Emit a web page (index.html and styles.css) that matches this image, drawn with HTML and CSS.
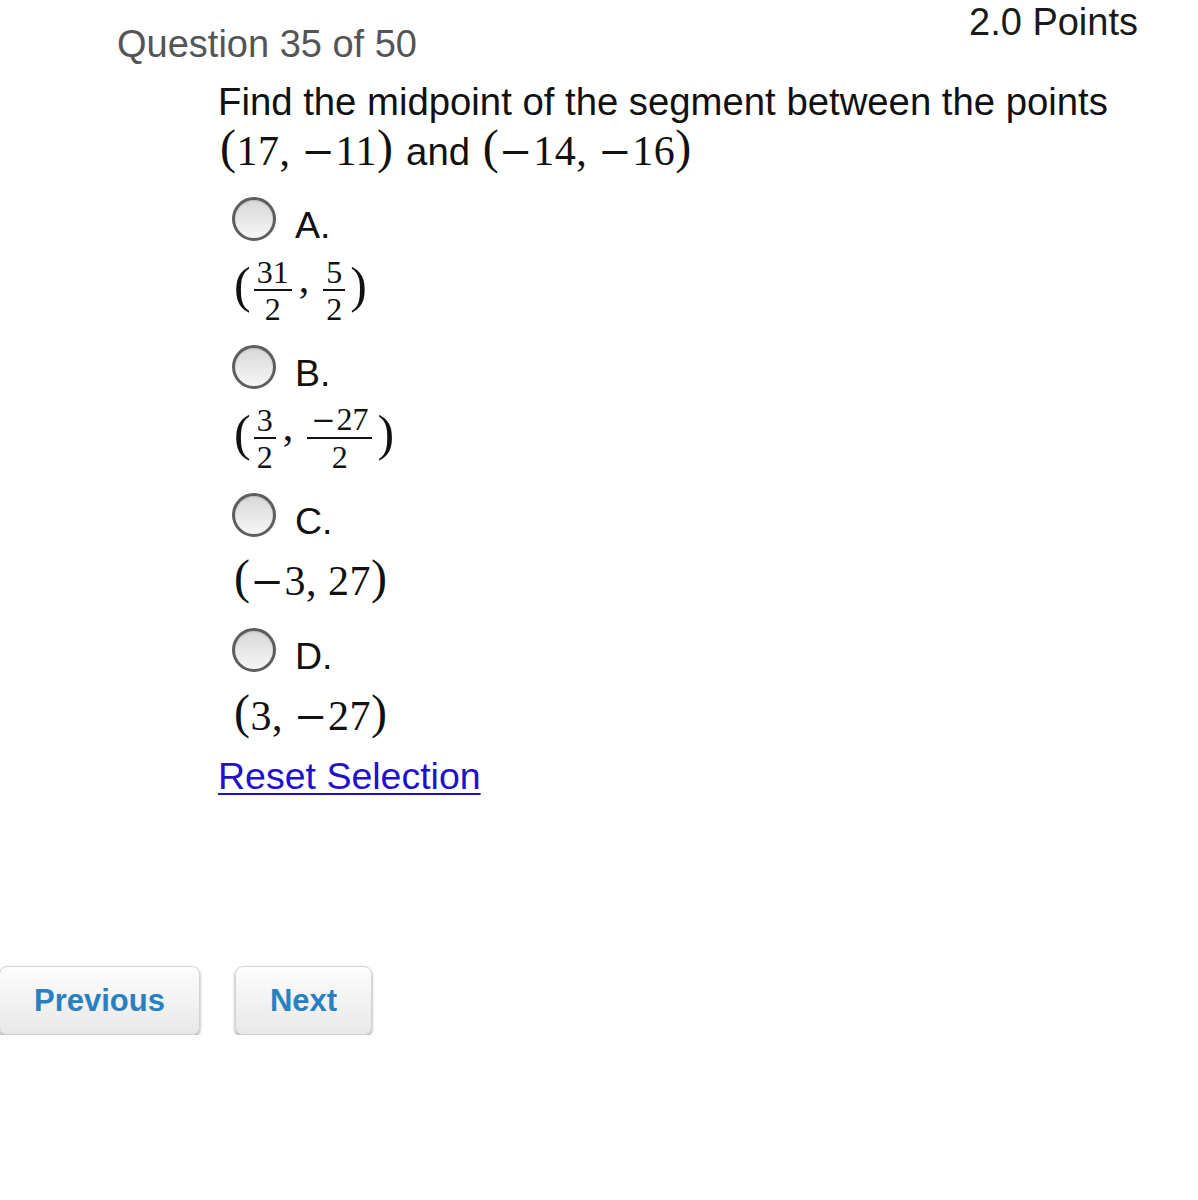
FILE: index.html
```html
<!DOCTYPE html>
<html lang="en">
<head>
<meta charset="utf-8">
<title>Question 35 of 50</title>
<link rel="stylesheet" href="styles.css">
</head>
<body>
<div class="header">
  <div class="qnum">Question 35 of 50</div>
  <div class="points">2.0 Points</div>
</div>
<div class="content">
  <div class="question">Find the midpoint of the segment between the points<br><span class="m"><span class="p">(</span>17, <span class="neg">−</span>11<span class="p">)</span></span> and <span class="m"><span class="p">(</span><span class="neg">−</span>14, <span class="neg">−</span>16<span class="p">)</span></span></div>

  <div class="option first">
    <div class="opt-row"><span class="radio"></span><span class="label">A.</span></div>
    <div class="answer frac-row">
      <span class="fp">(</span>
      <span class="frac"><span class="num">31</span><span class="den">2</span></span>
      <span class="fc">,</span>
      <span class="frac"><span class="num">5</span><span class="den">2</span></span>
      <span class="fp close">)</span>
    </div>
  </div>

  <div class="option">
    <div class="opt-row"><span class="radio"></span><span class="label">B.</span></div>
    <div class="answer frac-row">
      <span class="fp">(</span>
      <span class="frac"><span class="num">3</span><span class="den">2</span></span>
      <span class="fc">,</span>
      <span class="frac wide"><span class="num"><span class="fneg">−</span>27</span><span class="den">2</span></span>
      <span class="fp close">)</span>
    </div>
  </div>

  <div class="option">
    <div class="opt-row"><span class="radio"></span><span class="label">C.</span></div>
    <div class="answer simple"><span class="p">(</span><span class="neg">−</span>3, 27<span class="p">)</span></div>
  </div>

  <div class="option">
    <div class="opt-row"><span class="radio"></span><span class="label">D.</span></div>
    <div class="answer simple"><span class="p">(</span>3, <span class="neg">−</span>27<span class="p">)</span></div>
  </div>

  <div class="reset-wrap"><a class="reset" href="#">Reset Selection</a></div>
</div>

<div class="nav">
  <button class="btn" type="button">Previous</button>
  <button class="btn" type="button">Next</button>
</div>
</body>
</html>
```

FILE: styles.css
```css
body {
  margin: 0;
  background: #ffffff;
  font-family: "Liberation Sans", Arial, Helvetica, sans-serif;
  color: #111111;
}

.header {
  display: flex;
  justify-content: space-between;
  align-items: flex-start;
  padding: 0 60px 0 117px;
}

.qnum {
  margin-top: 22px;
  font-size: 38px;
  line-height: 44px;
  color: #555555;
}

.points {
  font-size: 38px;
  line-height: 44px;
  color: #1a1a1a;
}

.content {
  padding-left: 218px;
}

.question {
  margin-top: 11px;
  font-size: 38.3px;
  line-height: 50px;
  color: #111111;
}

.m {
  font-family: "Liberation Serif", "Times New Roman", serif;
  font-size: 42px;
  line-height: 44px;
  letter-spacing: 0.5px;
  margin: 0 2px;
}

.p {
  font-family: "Liberation Serif", "Times New Roman", serif;
  font-size: 48px;
  line-height: 40px;
  vertical-align: 2px;
}

.neg {
  font-family: "DejaVu Serif", "Liberation Serif", serif;
  font-size: 40px;
  line-height: 30px;
  margin-right: 0;
}

.option {
  margin-top: 22px;
}

.option.first {
  margin-top: 20px;
}

.opt-row {
  display: flex;
  align-items: flex-start;
  gap: 19px;
  padding-left: 14px;
  height: 49px;
}

.radio {
  flex: none;
  width: 44px;
  height: 44px;
  box-sizing: border-box;
  border-radius: 50%;
  border: 3px solid #5e5e5e;
  background: linear-gradient(#d8d8d8, #f6f6f6);
  box-shadow: inset 0 1px 2px rgba(0, 0, 0, 0.12);
}

.label {
  font-size: 37.5px;
  line-height: 44px;
  padding-top: 6px;
  color: #111111;
}

.answer {
  padding-left: 16px;
  color: #111111;
}

.answer.simple {
  margin-top: 14px;
  font-family: "Liberation Serif", "Times New Roman", serif;
  font-size: 42px;
  line-height: 50px;
  letter-spacing: 0.5px;
}

.answer.frac-row {
  display: flex;
  align-items: center;
  margin-top: 11px;
  height: 66px;
  font-family: "Liberation Serif", "Times New Roman", serif;
}

.fp {
  font-size: 50px;
  line-height: 50px;
  margin-bottom: 10px;
  margin-right: 3px;
}

.fp.close {
  margin-right: 0;
  margin-left: 5px;
}

.frac {
  display: flex;
  flex-direction: column;
  align-items: stretch;
  font-size: 32px;
  line-height: 30px;
  text-align: center;
}

.num {
  padding: 0 3px 2px;
  border-bottom: 2px solid #111111;
}

.den {
  margin-top: 3px;
  padding: 0 3px;
}

.frac.wide .num {
  padding: 0 4px 2px;
}

.fneg {
  font-family: "DejaVu Serif", "Liberation Serif", serif;
  font-size: 29px;
  margin-right: 1px;
}

.fc {
  font-size: 42px;
  line-height: 42px;
  margin: 0 14px 24px 7px;
}

.reset-wrap {
  margin-top: 13px;
}

.reset {
  font-size: 37.5px;
  line-height: 44px;
  color: #2211cc;
  text-decoration: underline;
  text-decoration-thickness: 2px;
  text-underline-offset: 4px;
}

.nav {
  display: flex;
  gap: 35px;
  margin-top: 168px;
  margin-left: -1px;
}

.btn {
  height: 69px;
  box-sizing: border-box;
  padding: 0 34px;
  border: 1px solid #d2d2d2;
  border-radius: 8px;
  background: linear-gradient(#fdfdfd, #e8e8e8);
  box-shadow: 0 2px 3px rgba(0, 0, 0, 0.4);
  font-family: "Liberation Sans", Arial, Helvetica, sans-serif;
  font-weight: bold;
  font-size: 31px;
  color: #2b7fbf;
  display: flex;
  align-items: center;
  cursor: pointer;
}
```
